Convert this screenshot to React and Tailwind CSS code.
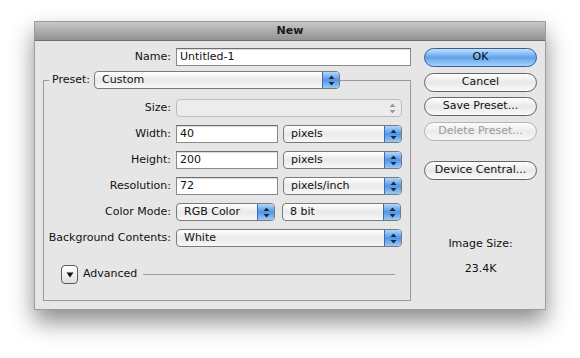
const font = { fontFamily: '"DejaVu Sans", "Liberation Sans", sans-serif' }

const Arrows = ({ muted }) => (
  <svg width="7" height="11" viewBox="0 0 7 11">
    <path d="M3.5 0.5 L6.5 4 L0.5 4 Z" fill={muted ? '#9a9a9a' : '#1c2a3c'} />
    <path d="M3.5 10.5 L6.5 7 L0.5 7 Z" fill={muted ? '#9a9a9a' : '#1c2a3c'} />
  </svg>
)

const Select = ({ value, className = '', disabled }) => (
  <div
    className={`flex h-[18px] items-stretch overflow-hidden rounded-[4px] border ${
      disabled ? 'border-[#bdbdbd] bg-[#ececec]' : 'border-[#7a7a7a] bg-gradient-to-b from-white via-[#e9e9e9] to-[#f8f8f8]'
    } ${className}`}
  >
    <span className="flex flex-1 items-center truncate pl-[7px] text-[11px] text-[#111]">{value}</span>
    {disabled ? (
      <span className="flex w-[17px] items-center justify-center">
        <Arrows muted />
      </span>
    ) : (
      <span className="flex w-[17px] items-center justify-center border-l border-[#3c6db0] bg-gradient-to-b from-[#b4d6f8] via-[#4e95e6] to-[#9ccaf6]">
        <Arrows />
      </span>
    )}
  </div>
)

const Field = ({ value, className = '' }) => (
  <div className={`flex h-[18px] items-center border border-[#8a8a8a] border-t-[#6e6e6e] bg-white pl-[3px] text-[11px] text-[#111] shadow-[inset_0_1px_1px_rgba(0,0,0,0.15)] ${className}`}>
    {value}
  </div>
)

const Row = ({ label, children }) => (
  <div className="flex h-[18px] items-center">
    <span className="w-[132px] pr-[5px] text-right text-[11px] text-[#111]">{label}</span>
    <div className="flex items-center gap-[5px]">{children}</div>
  </div>
)

const Button = ({ children, primary, disabled, className = '' }) => (
  <div
    className={`flex h-[19px] w-[113px] items-center justify-center rounded-full border text-[11px] ${
      primary
        ? 'border-[#2f5f9e] bg-gradient-to-b from-[#c5e0fb] via-[#5ea3ec] to-[#a9d2f8] text-[#0a0a0a]'
        : disabled
          ? 'border-[#b4b4b4] bg-gradient-to-b from-[#fbfbfb] via-[#ececec] to-[#f6f6f6] text-[#9a9a9a]'
          : 'border-[#666] bg-gradient-to-b from-white via-[#e8e8e8] to-[#fafafa] text-[#111]'
    } ${className}`}
  >
    {children}
  </div>
)

export default function App() {
  return (
    <div className="h-[358px] w-[580px] bg-white pl-[34px] pt-[21px]" style={font}>
      <div className="flex h-[289px] w-[512px] flex-col border border-[#9c9c9c] bg-[#e6e6e6] shadow-[0_12px_22px_rgba(0,0,0,0.45)]">
        <div className="flex h-[19px] items-center justify-center border-b border-[#6f6f6f] bg-gradient-to-b from-[#c8c8c8] to-[#929292] text-[11px] font-bold text-[#1a1a1a]">
          New
        </div>
        <div className="flex flex-1">
          <div className="flex w-[380px] flex-col pt-[7px]">
            <div className="flex h-[18px] items-center">
              <span className="w-[141px] pr-[5px] text-right text-[11px] text-[#111]">Name:</span>
              <Field value="Untitled-1" className="w-[235px]" />
            </div>
            <div className="ml-[8px] mt-[14px] flex h-[221px] w-[368px] flex-col border border-[#9a9a9a]">
              <div className="-mt-[10px] flex h-[18px] items-center">
                <span className="ml-[5px] w-[45px] bg-[#e6e6e6] pr-[4px] text-right text-[11px] text-[#111]">Preset:</span>
                <Select value="Custom" className="w-[246px]" />
              </div>
              <div className="mt-[10px] flex flex-col gap-[8px]">
                <Row label="Size:">
                  <Select value="" disabled className="w-[226px]" />
                </Row>
                <Row label="Width:">
                  <Field value="40" className="w-[102px]" />
                  <Select value="pixels" className="w-[119px]" />
                </Row>
                <Row label="Height:">
                  <Field value="200" className="w-[102px]" />
                  <Select value="pixels" className="w-[119px]" />
                </Row>
                <Row label="Resolution:">
                  <Field value="72" className="w-[102px]" />
                  <Select value="pixels/inch" className="w-[119px]" />
                </Row>
                <Row label="Color Mode:">
                  <Select value="RGB Color" className="w-[99px]" />
                  <Select value="8 bit" className="ml-[2px] w-[119px]" />
                </Row>
                <Row label="Background Contents:">
                  <Select value="White" className="w-[226px]" />
                </Row>
              </div>
              <div className="ml-[17px] mt-[18px] flex items-center">
                <span className="flex h-[19px] w-[17px] items-center justify-center rounded-[4px] border border-[#5a5a5a] bg-gradient-to-b from-white to-[#e0e0e0]">
                  <svg width="8" height="6" viewBox="0 0 8 6">
                    <path d="M0.5 0.5 L7.5 0.5 L4 5.5 Z" fill="#111" />
                  </svg>
                </span>
                <span className="ml-[5px] text-[11px] text-[#111]">Advanced</span>
                <span className="ml-[6px] mr-[15px] h-px flex-1 bg-[#9a9a9a]" />
              </div>
            </div>
          </div>
          <div className="ml-[9px] flex w-[113px] flex-col pt-[7px]">
            <Button primary>OK</Button>
            <Button className="mt-[6px]">Cancel</Button>
            <Button className="mt-[5px]">Save Preset...</Button>
            <Button disabled className="mt-[6px]">Delete Preset...</Button>
            <Button className="mt-[20px]">Device Central...</Button>
            <div className="mt-[56px] text-center text-[11px] text-[#111]">Image Size:</div>
            <div className="mt-[8px] text-center text-[11px] text-[#111]">23.4K</div>
          </div>
        </div>
      </div>
    </div>
  )
}
